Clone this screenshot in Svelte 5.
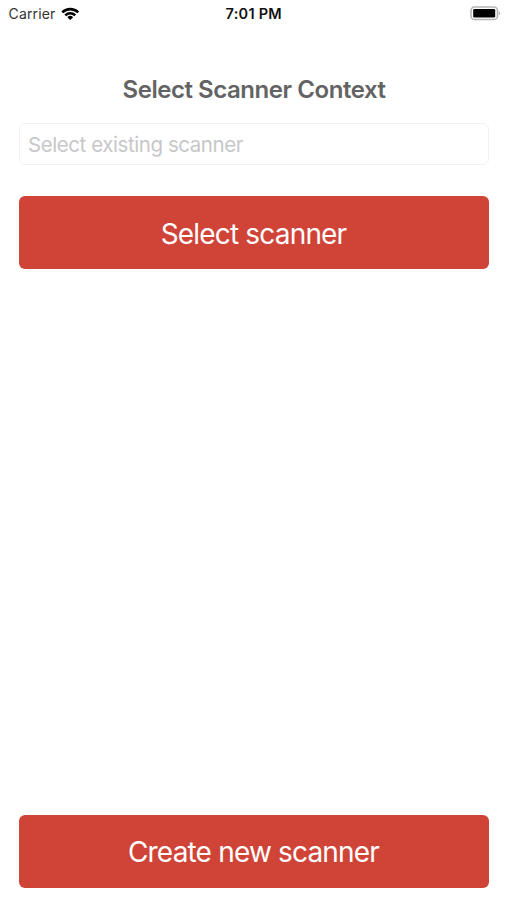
<script>
  let { carrier = "Carrier", time = "7:01 PM" } = $props();

  let scanner = $state("");
</script>

<div class="screen">
  <header class="status-bar">
    <div class="network">
      <span class="carrier">{carrier}</span>
      <svg class="wifi" viewBox="0 0 18 13" aria-hidden="true">
        <path d="M0.1 4.4a12.6 12.6 0 0 1 17.8 0l-1.9 1.9a9.9 9.9 0 0 0-14 0z" />
        <path d="M3.1 7.4a8.3 8.3 0 0 1 11.8 0l-1.9 1.8a5.7 5.7 0 0 0-8 0z" />
        <path d="M6.1 10.2a4.1 4.1 0 0 1 5.8 0L9 13z" />
      </svg>
    </div>
    <span class="time">{time}</span>
    <svg class="battery" viewBox="0 0 31 15" aria-hidden="true">
      <rect class="shell" x="1" y="1" width="26.5" height="12.5" rx="3.6" />
      <rect x="3.2" y="3" width="22" height="8.5" rx="1.2" />
      <path class="cap" d="M28.8 5.2c1.8.6 1.8 3.5 0 4.1z" />
    </svg>
  </header>

  <main>
    <h1>Select Scanner Context</h1>
    <input type="text" placeholder="Select existing scanner" bind:value={scanner} />
    <button class="select-btn" type="button">Select scanner</button>
    <button class="create-btn" type="button">Create new scanner</button>
  </main>
</div>

<style>
  :global(body) {
    margin: 0;
    background: #fff;
  }

  .screen {
    display: flex;
    flex-direction: column;
    box-sizing: border-box;
    height: 100vh;
    background: #fff;
    font-family: Inter, "Liberation Sans", sans-serif;
  }

  .status-bar {
    display: grid;
    grid-template-columns: 1fr auto 1fr;
    align-items: center;
    height: 27px;
    padding: 0 6px 0 8.5px;
    font-size: 14px;
    color: #111;
  }

  .network {
    display: flex;
    align-items: center;
    gap: 6px;
  }

  .carrier {
    letter-spacing: 0.15px;
    color: #333;
  }

  .wifi {
    width: 18.5px;
    height: 13px;
  }

  .time {
    margin-left: -2px;
    font-size: 14.5px;
    font-weight: 600;
    letter-spacing: 0.25px;
  }

  .battery {
    justify-self: end;
    width: 31px;
    height: 15px;
  }

  .shell {
    fill: #fff;
    stroke: #b5b5b5;
    stroke-width: 1.6;
  }

  .cap {
    fill: #b5b5b5;
  }

  main {
    display: flex;
    flex: 1;
    flex-direction: column;
    padding: 48px 18px 12.5px 19px;
  }

  h1 {
    margin: 0 0 18px;
    font-size: 24px;
    font-weight: 600;
    line-height: 30px;
    letter-spacing: -0.45px;
    text-align: center;
    color: #636364;
  }

  input {
    box-sizing: border-box;
    width: 100%;
    height: 42px;
    margin: 0 0 31.4px;
    padding: 1px 8px 0;
    border: 1.5px solid #f0f0f0;
    border-radius: 6px;
    background: #fff;
    font-family: inherit;
    font-size: 20.5px;
    letter-spacing: -0.43px;
    color: #58595b;
    outline: none;
  }

  input::placeholder {
    color: #c7c7c9;
    opacity: 1;
  }

  button {
    height: 73px;
    padding: 2px 1px 0 0;
    border: none;
    border-radius: 6px;
    background: #d04437;
    font-family: inherit;
    font-size: 28px;
    letter-spacing: -0.82px;
    color: #fff;
    cursor: pointer;
  }

  .create-btn {
    margin-top: auto;
  }
</style>
